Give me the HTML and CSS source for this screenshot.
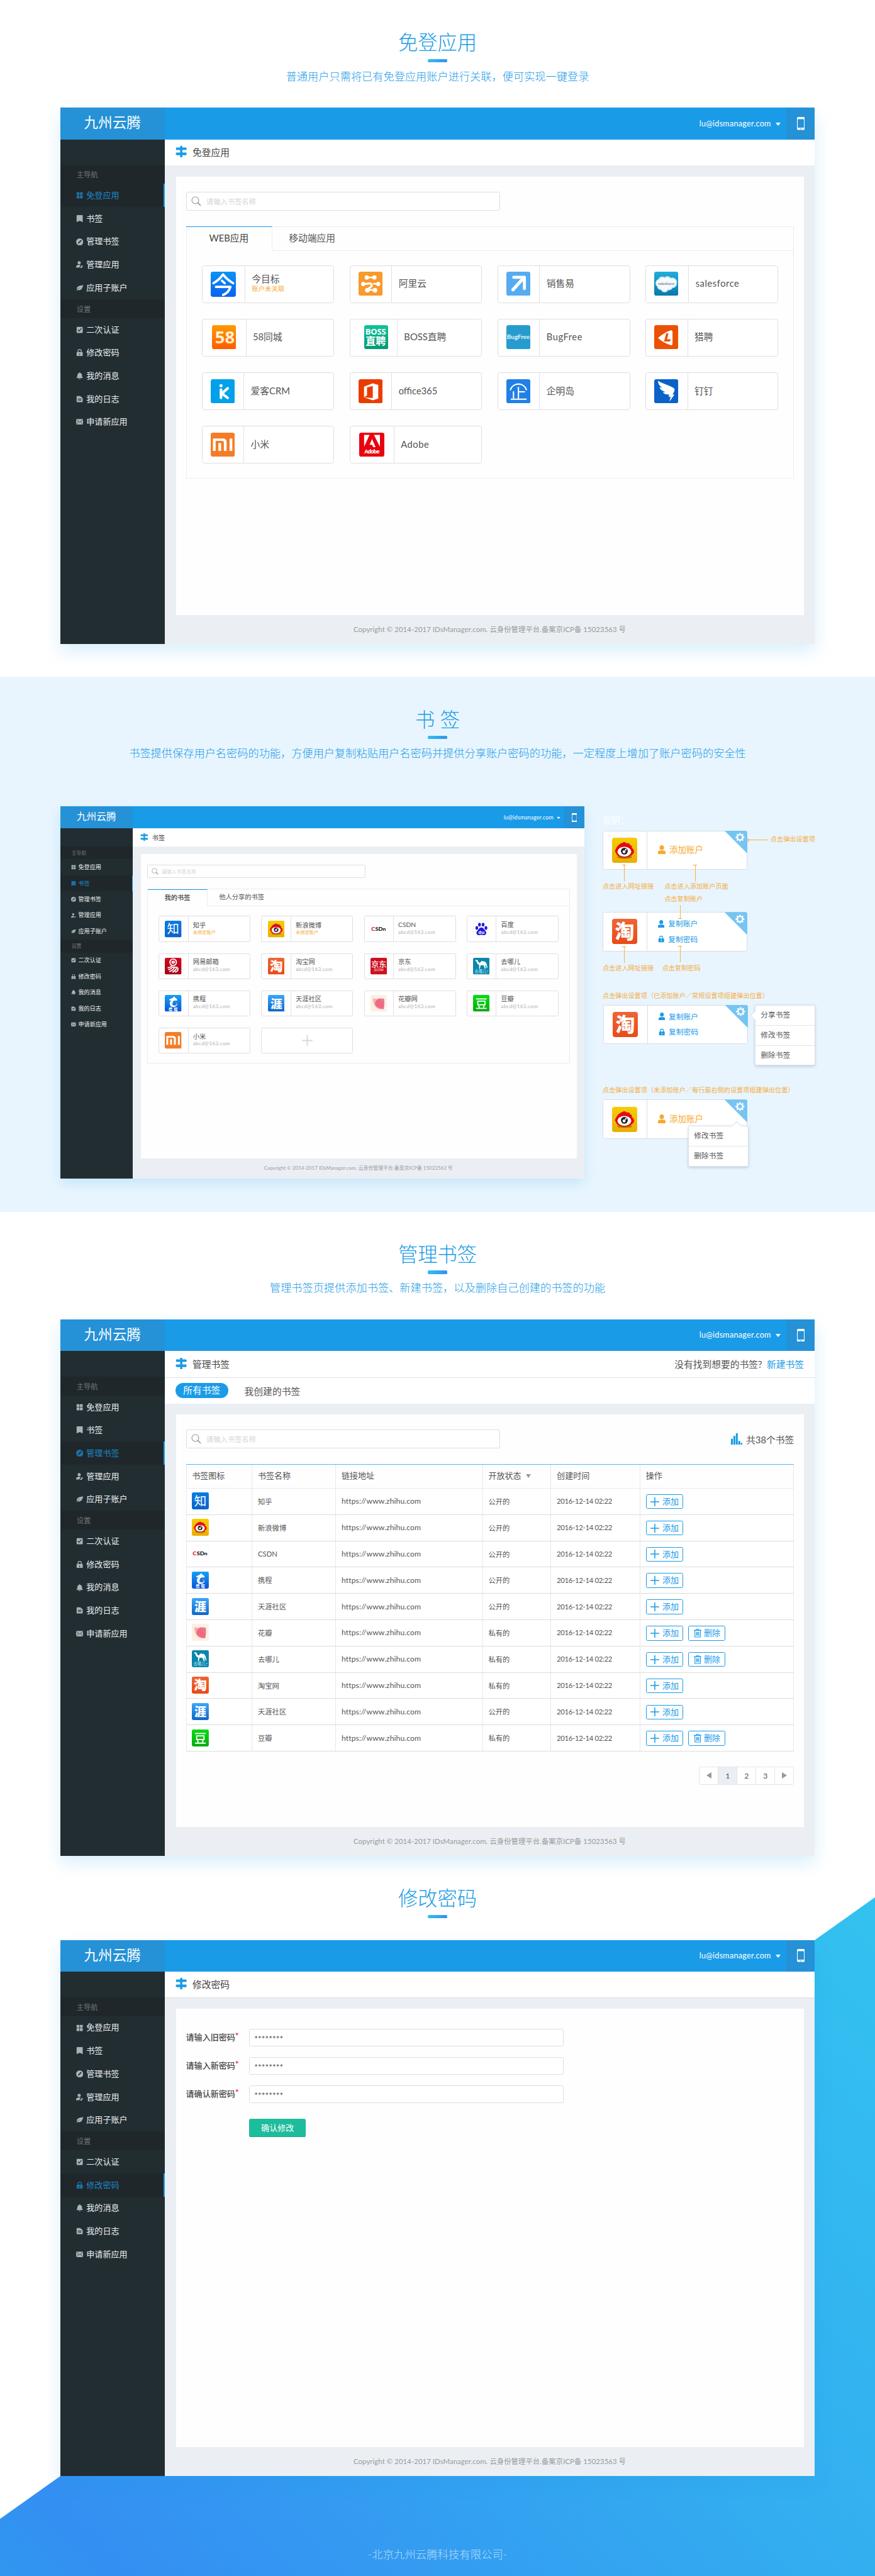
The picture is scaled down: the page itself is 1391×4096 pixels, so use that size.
FILE: index.html
```html
<!DOCTYPE html>
<html lang="zh-CN">
<head>
<meta charset="utf-8">
<title>九州云腾</title>
<link rel="stylesheet" href="styles.css">
</head>
<body>

<svg class="paints" width="0" height="0" aria-hidden="true">
  <defs>
    <linearGradient id="g-jin" x1="0" y1="0" x2="0" y2="1"><stop offset="0" stop-color="#0b93f6"/><stop offset="1" stop-color="#0a63f0"/></linearGradient>
    <linearGradient id="g-58" x1="0" y1="0" x2="0" y2="1"><stop offset="0" stop-color="#ff9c00"/><stop offset="1" stop-color="#ff5a00"/></linearGradient>
    <linearGradient id="g-58t" x1="0" y1="0" x2="0" y2="1"><stop offset="0" stop-color="#ffffff"/><stop offset="1" stop-color="#ffe2a8"/></linearGradient>
    <linearGradient id="g-boss" x1="0" y1="0" x2="0" y2="1"><stop offset="0" stop-color="#10c39c"/><stop offset="1" stop-color="#059a74"/></linearGradient>
    <linearGradient id="g-sf" x1="0" y1="0" x2="0" y2="1"><stop offset="0" stop-color="#22addb"/><stop offset="1" stop-color="#0a78a8"/></linearGradient>
    <linearGradient id="g-zhi" x1="0" y1="0" x2="0" y2="1"><stop offset="0" stop-color="#0b7ce2"/><stop offset="1" stop-color="#0a63cb"/></linearGradient>
    <linearGradient id="g-wb" x1="0" y1="0" x2="0" y2="1"><stop offset="0" stop-color="#f6cd05"/><stop offset="1" stop-color="#e9ae06"/></linearGradient>
    <linearGradient id="g-tao" x1="0" y1="0" x2="0" y2="1"><stop offset="0" stop-color="#ee6534"/><stop offset="1" stop-color="#ea4a18"/></linearGradient>
    <linearGradient id="g-dou" x1="0" y1="0" x2="0" y2="1"><stop offset="0" stop-color="#06dc12"/><stop offset="1" stop-color="#05ab0e"/></linearGradient>
    <linearGradient id="g-ya" x1="0" y1="0" x2="0" y2="1"><stop offset="0" stop-color="#3da6fa"/><stop offset="1" stop-color="#0d67c9"/></linearGradient>
    <linearGradient id="g-xie" x1="0" y1="0" x2="0" y2="1"><stop offset="0" stop-color="#14a0f8"/><stop offset="1" stop-color="#0a55d8"/></linearGradient>
    <linearGradient id="g-yi" x1="0" y1="0" x2="0" y2="1"><stop offset="0" stop-color="#d40a22"/><stop offset="1" stop-color="#a30014"/></linearGradient>
  </defs>
</svg>

<svg class="symbols" aria-hidden="true">
  <symbol id="app-jin" viewBox="0 0 46 46"><rect width="46" height="46" rx="4" fill="url(#g-jin)"/><g fill="none" stroke="#fff" stroke-width="4.2" stroke-linecap="round" stroke-linejoin="round"><path d="M5 21 C12 17 19 10 22.500 5 C27 11 34 17 41 21"/><path d="M20.500 16.500 L25.500 21"/><path d="M9.500 27.800 H36 C34 34 30 40 22.500 42.500"/></g></symbol>
  <symbol id="app-ali" viewBox="0 0 44 44"><rect width="44" height="44" rx="4" fill="#f89a2c"/><g fill="#fff"><circle cx="15" cy="10.500" r="3.900"/><circle cx="29" cy="10.500" r="3.900"/><path d="M15 7.500 Q22 11 29 7.500 V13.500 Q22 10 15 13.500Z"/><circle cx="8.500" cy="22.500" r="3.900"/><circle cx="36" cy="22.500" r="3.900"/><circle cx="16" cy="33.800" r="4.200"/><circle cx="30" cy="33.800" r="4.200"/></g><g fill="none" stroke="#fff" stroke-linecap="round" stroke-linejoin="round"><path d="M9 22.500 L16 22 Q21 20.500 24 23 Q25 27 20 29.500 L16 34" stroke-width="3.800"/><path d="M35 22.500 L28 22" stroke-width="3"/><path d="M17 34.500 Q23 32 30 34.500" stroke-width="3"/></g></symbol>
  <symbol id="app-xsy" viewBox="0 0 44 44"><rect width="44" height="44" rx="4" fill="#56abf1"/><path d="M13.500 10.300 H33 V31" fill="none" stroke="#fff" stroke-width="5.500" stroke-linecap="round" stroke-linejoin="round"/><path d="M31 12 L12 33" stroke="#fff" stroke-width="6" stroke-linecap="round"/></symbol>
  <symbol id="app-sf" viewBox="0 0 44 44"><rect width="44" height="44" rx="4" fill="url(#g-sf)"/><path d="M8 14 A7 7 0 0 1 19 11 A7 7 0 0 1 30 12 A8 8 0 0 1 41 21 A8 8 0 0 1 33 29.500 A6.500 6.500 0 0 1 25 33 A6.500 6.500 0 0 1 13 33 A6.500 6.500 0 0 1 6 27 A7.500 7.500 0 0 1 8 14Z" fill="#f4fbff" stroke="#a8dcf5" stroke-width="1.500"/><text x="22" y="24" font-size="8" textLength="30" text-anchor="middle" class="serif" fill="#555">salesforce</text></symbol>
  <symbol id="app-58" viewBox="0 0 44 44"><rect width="44" height="44" rx="4" fill="url(#g-58)"/><text x="23.500" y="33.500" font-size="31.500" font-weight="700" text-anchor="middle" class="sans" fill="url(#g-58t)">58</text></symbol>
  <symbol id="app-boss" viewBox="0 0 44 44"><rect width="44" height="44" rx="4" fill="url(#g-boss)"/><text x="21" y="17" font-size="15" font-weight="700" textLength="38" text-anchor="middle" class="sans" fill="#fff">BOSS</text><text x="21" y="36" font-size="18.500" font-weight="700" text-anchor="middle" fill="#fff">直聘</text></symbol>
  <symbol id="app-bug" viewBox="0 0 44 44"><rect width="44" height="44" rx="4" fill="#259ccd"/><text x="22" y="25" font-size="11.500" font-weight="700" textLength="42" text-anchor="middle" fill="#e9f6fb">BugFree</text></symbol>
  <symbol id="app-lie" viewBox="0 0 44 44"><rect width="44" height="44" rx="4" fill="#ec5103"/><path d="M8 22.500 C15 17 22 12 30 9.500 Q33.500 9 33.500 13 V33 Q33.500 37.500 30 36.500 C21 34 14 29.500 8 24.500 Q7 23.500 8 22.500Z" fill="#fff"/><path d="M22 15 H26 L23.500 26 H30 L29 30 H18Z" fill="#ec5103"/></symbol>
  <symbol id="app-ik" viewBox="0 0 44 44"><rect width="44" height="44" rx="4" fill="#00a0ea"/><circle cx="18.800" cy="11.800" r="2.900" fill="#fff"/><g fill="none" stroke="#fff" stroke-width="4.800" stroke-linecap="round"><path d="M18.800 19 V34"/><path d="M31 16.500 L20.500 26 L31 34"/></g></symbol>
  <symbol id="app-office" viewBox="0 0 44 44"><rect width="44" height="44" rx="4" fill="#eb3c00"/><path d="M10 13.500 L26 7.500 L36 10.300 V35.500 L26 38.500 L10 33 L26 34.500 V12.500 L15.500 15 V29.500 L10 33Z" fill="#fff"/></symbol>
  <symbol id="app-qi" viewBox="0 0 44 44"><rect width="44" height="44" rx="4" fill="#2180e6"/><g fill="none" stroke="#fff" stroke-width="2.400"><path d="M7 20 C12 5 32 5 37 20"/><path d="M22 14 V35 M22 23 H34 M13 22 V35 M8 36.500 H37"/></g></symbol>
  <symbol id="app-ding" viewBox="0 0 44 44"><rect width="44" height="44" rx="4" fill="#0a62c8"/><path d="M7 3 C14 8 28 11 36 16.500 C39 19 36 24 33.500 28 H37 L28 41 L30 32 H26 L27.500 28 C20 28 17 26 16 23.500 L21 23.500 C13 21 10.500 18 10 14.500 L15 15.500 C9 12 7 8 7 3Z" fill="#fff"/></symbol>
  <symbol id="app-mi" viewBox="0 0 44 44"><rect width="44" height="44" rx="4" fill="#f47c26"/><path d="M4 10.500 H22 Q29 10.500 29 17 V33.500 H24 V18 Q24 15 21 15 H9 V33.500 H4Z M14 19 H19 V33.500 H14Z M34.500 10.500 H39.500 V33.500 H34.500Z" fill="#fff"/></symbol>
  <symbol id="app-adobe" viewBox="0 0 46 44"><rect width="46" height="44" rx="4" fill="#e9020f"/><path d="M9 4 H19 L9 26Z M38 4 H27 L38 26Z M23.500 11.500 L30 26.500 H25.500 L23.800 22 H19Z" fill="#fff"/><text x="23.500" y="38.500" font-size="10.500" font-weight="700" textLength="28" text-anchor="middle" class="sans" fill="#fff">Adobe</text></symbol>

  <symbol id="app-zhihu" viewBox="0 0 44 44"><rect width="44" height="44" rx="4" fill="url(#g-zhi)"/><text x="22" y="33.500" font-size="32" font-weight="400" text-anchor="middle" fill="#fff">知</text></symbol>
  <symbol id="app-weibo" viewBox="0 0 44 44"><rect width="44" height="44" rx="4" fill="url(#g-wb)"/><ellipse cx="22" cy="34" rx="13" ry="3" fill="#b47a00"/><path d="M5 24 C7 16 13 10 18 9 C20 7 24 7 25 10 C29 9 32 10 31 13 C35 13 35 16 34.500 18 C39 21 40 26 36 29 C30 37 10 37 7 27Z" fill="#e40a12"/><ellipse cx="21.500" cy="24.500" rx="12" ry="8.500" fill="#fff"/><circle cx="21.500" cy="23.500" r="6" fill="#222"/><circle cx="21" cy="24.500" r="2.600" fill="#fff"/><circle cx="24" cy="21" r="1.500" fill="#fff"/></symbol>
  <symbol id="app-csdn" viewBox="0 0 44 44"><rect x=".5" y=".5" width="43" height="43" rx="5" fill="#fff" stroke="#f1f1f1"/><text x="2" y="26" font-size="13" font-weight="900" textLength="10" lengthAdjust="spacingAndGlyphs" class="lato" fill="#d60e18">C</text><text x="12.500" y="26" font-size="13" font-weight="900" textLength="28" lengthAdjust="spacingAndGlyphs" class="lato" fill="#151515">SDn</text></symbol>
  <symbol id="app-baidu" viewBox="0 0 44 44"><rect x=".5" y=".5" width="43" height="43" rx="5" fill="#fff" stroke="#ececec"/><g fill="#2319dc"><ellipse cx="10" cy="19" rx="3.600" ry="4.800"/><ellipse cx="17" cy="10.500" rx="3.600" ry="5"/><ellipse cx="26.500" cy="10.500" rx="3.600" ry="5"/><ellipse cx="34" cy="19" rx="3.600" ry="4.800"/><path d="M22 18 C27 18 29 23 33 27 C37 32 34 38.500 28 38 C24 37.300 20 37.300 16 38 C9 38.500 7 32 11 27 C15 23 17 18 22 18Z"/></g><text x="22" y="35" font-size="13" font-weight="700" text-anchor="middle" class="sans" fill="#fff">du</text></symbol>
  <symbol id="app-yi" viewBox="0 0 44 44"><rect width="44" height="44" rx="4" fill="url(#g-yi)"/><g fill="none" stroke="#fff" stroke-width="3" stroke-linecap="round"><circle cx="22" cy="11.800" r="8.600"/><path d="M18.500 12 H26 Q25.500 8.500 22 8.500 Q18.500 8.800 18.500 12 Q19 15.500 24.500 15" stroke-width="2.200"/><path d="M8.500 26 C13 26 16 24 18 21.500"/><path d="M10 31 C15 30 18 28 20.500 24.500 H30 C37 25 36 36 28 37.500"/><path d="M13 36 C19 34 23 31 25.500 26"/><path d="M21 37.500 C26 35 29 32 30.500 28"/></g></symbol>
  <symbol id="app-tao" viewBox="0 0 44 44"><rect width="44" height="44" rx="4" fill="url(#g-tao)"/><text x="22" y="34.500" font-size="34" font-weight="900" text-anchor="middle" fill="#fff">淘</text></symbol>
  <symbol id="app-jd" viewBox="0 0 44 44"><rect width="44" height="44" rx="4" fill="#cf1020"/><text x="22" y="24.500" font-size="20" font-weight="500" text-anchor="middle" fill="#fff">京东</text><text x="22" y="35.500" font-size="7.500" textLength="24" text-anchor="middle" class="sans" fill="#fff">JD.COM</text></symbol>
  <symbol id="app-qunar" viewBox="0 0 44 44"><rect width="44" height="44" rx="4" fill="#0b86ab"/><path d="M5 7 C8 4 12 5 13 8 C14 12 16 14 19 13 C21 8 25 7 27 10 C29 9 32 9 34 13 C37 17 37 22 38 27 L36 27 C35 23 34 20 32 18 C33 22 33 26 33 29 H31 C30 25 29 22 27 19 C24 20 22 20 20 19 L18 29 H16 L16 18 C12 18 10 14 9 9Z" fill="#fff"/><text x="22" y="39" font-size="10.500" text-anchor="middle" fill="#bfe6f2">去哪儿?</text></symbol>
  <symbol id="app-ctrip" viewBox="0 0 44 44"><rect width="44" height="44" rx="4" fill="url(#g-xie)"/><path d="M11 12.500 C14 10.500 17 9 20 8.500 C22 5.500 24 4.500 26.500 4.500 C26 6 26 7 26.500 7.500 C30 8.500 32.500 11 33.500 14.500 C31 14.800 28 15 26 15 C21 16 19.500 21 21 25 C17 24 15 20 17 15.500 C14 15 11.500 14 11 12.500Z" fill="#fff"/><path d="M14.500 17 C11 23 14 31 21 32 C28 33 33.500 28 33.500 22 C31 27 27 29 23 27.500 C18.500 26 16 22 17 17Z" fill="#fff"/><path d="M28 18 Q31 22 28.500 26 Q32 24 31.500 19.500Z" fill="#f8961c"/><text x="22" y="41.500" font-size="9.500" font-weight="900" textLength="23" text-anchor="middle" fill="#fff">携程</text></symbol>
  <symbol id="app-tianya" viewBox="0 0 44 44"><rect width="44" height="44" rx="4" fill="url(#g-ya)"/><text x="22" y="34" font-size="31" font-weight="900" text-anchor="middle" fill="#fff">涯</text></symbol>
  <symbol id="app-huaban" viewBox="0 0 44 44"><rect width="44" height="44" rx="4" fill="#fcf0e2"/><path d="M6 9 L22 11 C28 14 35 24 35 34 L26 38 C14 36 7 26 6 9Z" fill="#f7aeb0"/><path d="M22 9 L36 10 C37 22 37 30 34 38 C28 36 14 34 12 24 C12 16 17 12 22 9Z" fill="#ec5f7c" opacity=".85"/></symbol>
  <symbol id="app-douban" viewBox="0 0 44 44"><rect width="44" height="44" rx="4" fill="url(#g-dou)"/><g fill="none" stroke="#fff" stroke-width="3"><path d="M8 10.500 H36 M8 35.500 H36"/><rect x="12.500" y="16.500" width="19" height="9.500"/><path d="M14.500 28 L17 34 M29.500 28 L27 34"/></g></symbol>

  <symbol id="i-grid" viewBox="0 0 14 14"><path d="M1 1h5.500v5.500H1zM7.500 1H13v5.500H7.500zM1 7.500h5.500V13H1zM7.500 7.500H13V13H7.500z" fill="currentColor"/></symbol>
  <symbol id="i-mark" viewBox="0 0 14 14"><path d="M2 0h10q1 0 1 1v13l-6-3-6 3V1q0-1 1-1z" fill="currentColor"/></symbol>
  <symbol id="i-pen" viewBox="0 0 14 14"><path fill-rule="evenodd" d="M7 0a7 7 0 1 0 0 14A7 7 0 0 0 7 0zM9.300 3l1.700 1.700-5 5L3.500 10.500 4.300 8z" fill="currentColor"/></symbol>
  <symbol id="i-useredit" viewBox="0 0 14 14"><circle cx="6" cy="3.300" r="3.100" fill="currentColor"/><path d="M0 13V10.500Q1 8 6 7.500Q8 7.600 9 8.300L6 13z" fill="currentColor"/><path d="M7 13.500L12 8.500a1.500 1.500 0 0 1 1 2L11 13.500z" fill="currentColor"/></symbol>
  <symbol id="i-leaf" viewBox="0 0 14 14"><path d="M14 1.500C8 3 3 3 1.500 7.500Q1 9.500 1.500 10.500Q4 7.500 8.500 6Q4 8.500 .5 12.500L1.500 13 3 11.300Q8 13 11 9Q13 6 14 1.500z" fill="currentColor"/></symbol>
  <symbol id="i-check" viewBox="0 0 14 14"><path fill-rule="evenodd" d="M2.500 1h9Q13 1 13 2.500v9q0 1.500-1.500 1.500h-9Q1 13 1 11.500v-9Q1 1 2.500 1zM3 7l3 3.500L11 4 10 3 6 8 4 6z" fill="currentColor"/></symbol>
  <symbol id="i-lock" viewBox="0 0 14 14"><path fill-rule="evenodd" d="M3 6V4a4 4 0 0 1 8 0v2h1q1 0 1 1v6q0 1-1 1H2q-1 0-1-1V7q0-1 1-1zM4.500 6h5V4a2.500 2.500 0 0 0-5 0zM6.300 9v3h1.400V9z" fill="currentColor"/></symbol>
  <symbol id="i-bell" viewBox="0 0 14 14"><path d="M7 0Q8 0 8 1.200Q11.500 2 11.500 6Q11.500 9 13 10.500V11.500H1V10.500Q2.500 9 2.500 6Q2.500 2 6 1.200Q6 0 7 0zM5.500 12.300h3Q8.500 14 7 14T5.500 12.300z" fill="currentColor"/></symbol>
  <symbol id="i-file" viewBox="0 0 14 14"><path fill-rule="evenodd" d="M2 1h6l5 4v7q0 1-1 1H2q-1 0-1-1V2q0-1 1-1zM3.500 6v1h7V6zM3.500 8.500v1h7v-1z" fill="currentColor"/></symbol>
  <symbol id="i-mail" viewBox="0 0 14 14"><path d="M0 1.500h14v11H0z" fill="currentColor"/><path d="M.5 2.500L7 8l6.500-5.500M.5 12L5 7M13.500 12L9 7" stroke="#222d32" fill="none"/></symbol>
  <symbol id="i-sign" viewBox="0 0 21 21"><path d="M8.500 0h4v3h6.500l2 2-2 2.500H12.500V12H20v5h-7.500v4h-4v-4H2L0 14.500 2 12h6.500V7.500H1V3h7.500z" fill="#1a9be7"/></symbol>
  <symbol id="i-search" viewBox="0 0 18 18"><circle cx="7.500" cy="7.500" r="6.300" fill="none" stroke="#999" stroke-width="1.300"/><path d="M12 12l5 5" stroke="#999" stroke-width="1.900" stroke-linecap="round"/></symbol>
  <symbol id="i-phone" viewBox="0 0 14 24"><path fill-rule="evenodd" d="M2 0h10q2 0 2 2v20q0 2-2 2H2q-2 0-2-2V2q0-2 2-2zM1.300 4v15.500h11.400V4zM6 21v1.500h2V21z" fill="#fff"/></symbol>
  <symbol id="i-user" viewBox="0 0 14 16"><ellipse cx="7" cy="4.300" rx="4" ry="4.300" fill="currentColor"/><path d="M0 16v-2.500Q0 9.800 4 9.600H10Q14 9.800 14 13.500V16z" fill="currentColor"/></symbol>
  <symbol id="i-gear" viewBox="0 0 18 18"><circle cx="9" cy="9" r="5" fill="none" stroke="#fff" stroke-width="2.600"/><g stroke="#fff" stroke-width="3.200"><path d="M9 .5v3M9 14.500v3M.5 9h3M14.500 9h3M3 3l2 2M13 13l2 2M15 3l-2 2M5 13l-2 2"/></g></symbol>
  <symbol id="i-plus" viewBox="0 0 16 16"><path d="M8 0v16M0 8h16" stroke="currentColor" stroke-width="1.800"/></symbol>
  <symbol id="i-trash" viewBox="0 0 14 16"><path d="M0 2.800h14M4.500 2.500V.8h5v1.700M2 3v12h10V3M5 5.500v7M7 5.500v7M9 5.500v7" fill="none" stroke="currentColor" stroke-width="1.300"/></symbol>
  <symbol id="i-chart" viewBox="0 0 21 21"><path d="M0 10h3.500v11H0zM4.500 5H8v16H4.500zM9 0h3.500v21H9zM13.500 14H17v7h-3.500zM18 17.500h3V21h-3z" fill="#1a9be7"/></symbol>
</svg>

<main class="page">

  <section class="block block-apps">
    <h2 class="title">免登应用</h2>
    <div class="bar"></div>
    <p class="lead">普通用户只需将已有免登应用账户进行关联，便可实现一键登录</p>
    <div class="win">
      <header class="top"><div class="logo">九州云腾</div><div class="user">lu@idsmanager.com<i class="caret"></i></div><div class="phone"><svg><use href="#i-phone"/></svg></div></header>
      <nav class="side">
        <h4>主导航</h4>
        <a class="on"><svg><use href="#i-grid"/></svg>免登应用</a>
        <a><svg><use href="#i-mark"/></svg>书签</a>
        <a><svg><use href="#i-pen"/></svg>管理书签</a>
        <a><svg><use href="#i-useredit"/></svg>管理应用</a>
        <a><svg><use href="#i-leaf"/></svg>应用子账户</a>
        <h4>设置</h4>
        <a><svg><use href="#i-check"/></svg>二次认证</a>
        <a><svg><use href="#i-lock"/></svg>修改密码</a>
        <a><svg><use href="#i-bell"/></svg>我的消息</a>
        <a><svg><use href="#i-file"/></svg>我的日志</a>
        <a><svg><use href="#i-mail"/></svg>申请新应用</a>
      </nav>
      <div class="body">
        <div class="crumb"><svg><use href="#i-sign"/></svg>免登应用</div>
        <div class="panel">
          <div class="search"><svg><use href="#i-search"/></svg>请输入书签名称</div>
          <div class="tabs">
            <div class="tabhead"><span class="tab on">WEB应用</span><span class="tab">移动端应用</span></div>
            <div class="cards">
              <div class="card"><div class="ico big"><svg><use href="#app-jin"/></svg></div><div class="txt"><b>今目标</b><em>账户未关联</em></div></div>
              <div class="card"><div class="ico"><svg><use href="#app-ali"/></svg></div><div class="txt"><b>阿里云</b></div></div>
              <div class="card"><div class="ico"><svg><use href="#app-xsy"/></svg></div><div class="txt"><b>销售易</b></div></div>
              <div class="card"><div class="ico wide"><svg><use href="#app-sf"/></svg></div><div class="txt"><b class="latin">salesforce</b></div></div>
              <div class="card"><div class="ico wider"><svg><use href="#app-58"/></svg></div><div class="txt"><b>58同城</b></div></div>
              <div class="card"><div class="ico inset"><svg><use href="#app-boss"/></svg></div><div class="txt"><b>BOSS直聘</b></div></div>
              <div class="card"><div class="ico"><svg><use href="#app-bug"/></svg></div><div class="txt"><b class="latin">BugFree</b></div></div>
              <div class="card"><div class="ico"><svg><use href="#app-lie"/></svg></div><div class="txt"><b>猎聘</b></div></div>
              <div class="card"><div class="ico"><svg><use href="#app-ik"/></svg></div><div class="txt"><b>爱客CRM</b></div></div>
              <div class="card"><div class="ico"><svg><use href="#app-office"/></svg></div><div class="txt"><b>office365</b></div></div>
              <div class="card"><div class="ico"><svg><use href="#app-qi"/></svg></div><div class="txt"><b>企明岛</b></div></div>
              <div class="card"><div class="ico"><svg><use href="#app-ding"/></svg></div><div class="txt"><b>钉钉</b></div></div>
              <div class="card"><div class="ico"><svg><use href="#app-mi"/></svg></div><div class="txt"><b>小米</b></div></div>
              <div class="card"><div class="ico adobe"><svg><use href="#app-adobe"/></svg></div><div class="txt"><b class="latin">Adobe</b></div></div>
            </div>
          </div>
        </div>
        <footer class="copy">Copyright © 2014-2017 IDsManager.com. 云身份管理平台.备案京ICP备 15023563 号</footer>
      </div>
    </div>
  </section>

  <section class="block block-marks">
    <h2 class="title">书 签</h2>
    <div class="bar"></div>
    <p class="lead">书签提供保存用户名密码的功能，方便用户复制粘贴用户名密码并提供分享账户密码的功能，一定程度上增加了账户密码的安全性</p>
    <div class="split">
      <div class="win small">
        <header class="top"><div class="logo">九州云腾</div><div class="user">lu@idsmanager.com<i class="caret"></i></div><div class="phone"><svg><use href="#i-phone"/></svg></div></header>
        <nav class="side">
          <h4>主导航</h4>
          <a><svg><use href="#i-grid"/></svg>免登应用</a>
          <a class="on"><svg><use href="#i-mark"/></svg>书签</a>
          <a><svg><use href="#i-pen"/></svg>管理书签</a>
          <a><svg><use href="#i-useredit"/></svg>管理应用</a>
          <a><svg><use href="#i-leaf"/></svg>应用子账户</a>
          <h4>设置</h4>
          <a><svg><use href="#i-check"/></svg>二次认证</a>
          <a><svg><use href="#i-lock"/></svg>修改密码</a>
          <a><svg><use href="#i-bell"/></svg>我的消息</a>
          <a><svg><use href="#i-file"/></svg>我的日志</a>
          <a><svg><use href="#i-mail"/></svg>申请新应用</a>
        </nav>
        <div class="body">
          <div class="crumb"><svg><use href="#i-sign"/></svg>书签</div>
          <div class="panel">
            <div class="search"><svg><use href="#i-search"/></svg>请输入书签名称</div>
            <div class="tabs">
              <div class="tabhead"><span class="tab on strong">我的书签</span><span class="tab">他人分享的书签</span></div>
              <div class="cards">
                <div class="card"><div class="ico"><svg><use href="#app-zhihu"/></svg></div><div class="txt"><b>知乎</b><em>未绑定账户</em></div></div>
                <div class="card"><div class="ico"><svg><use href="#app-weibo"/></svg></div><div class="txt"><b>新浪微博</b><em>未绑定账户</em></div></div>
                <div class="card"><div class="ico"><svg><use href="#app-csdn"/></svg></div><div class="txt"><b>CSDN</b><small>abcd@163.com</small></div></div>
                <div class="card"><div class="ico"><svg><use href="#app-baidu"/></svg></div><div class="txt"><b>百度</b><small>abcd@163.com</small></div></div>
                <div class="card"><div class="ico"><svg><use href="#app-yi"/></svg></div><div class="txt"><b>网易邮箱</b><small>abcd@163.com</small></div></div>
                <div class="card"><div class="ico"><svg><use href="#app-tao"/></svg></div><div class="txt"><b>淘宝网</b><small>abcd@163.com</small></div></div>
                <div class="card"><div class="ico"><svg><use href="#app-jd"/></svg></div><div class="txt"><b>京东</b><small>abcd@163.com</small></div></div>
                <div class="card"><div class="ico"><svg><use href="#app-qunar"/></svg></div><div class="txt"><b>去哪儿</b><small>abcd@163.com</small></div></div>
                <div class="card"><div class="ico"><svg><use href="#app-ctrip"/></svg></div><div class="txt"><b>携程</b><small>abcd@163.com</small></div></div>
                <div class="card"><div class="ico"><svg><use href="#app-tianya"/></svg></div><div class="txt"><b>天涯社区</b><small>abcd@163.com</small></div></div>
                <div class="card"><div class="ico"><svg><use href="#app-huaban"/></svg></div><div class="txt"><b>花瓣网</b><small>abcd@163.com</small></div></div>
                <div class="card"><div class="ico"><svg><use href="#app-douban"/></svg></div><div class="txt"><b>豆瓣</b><small>abcd@163.com</small></div></div>
                <div class="card"><div class="ico"><svg><use href="#app-mi"/></svg></div><div class="txt"><b>小米</b><small>abcd@163.com</small></div></div>
                <div class="card add"><svg><use href="#i-plus"/></svg></div>
              </div>
            </div>
          </div>
          <footer class="copy">Copyright © 2014-2017 IDsManager.com. 云身份管理平台.备案京ICP备 15023563 号</footer>
        </div>
      </div>

      <aside class="notes">
        <h3>说明：</h3>
        <div class="demo">
          <div class="demo-ico"><svg><use href="#app-weibo"/></svg></div>
          <div class="demo-txt"><p class="orange"><svg><use href="#i-user"/></svg>添加账户</p></div>
          <div class="corner"><svg><use href="#i-gear"/></svg></div>
          <i class="pin across"></i><span class="tip t-set">点击弹出设置项</span>
          <i class="pin p-left"></i><span class="tip t-left">点击进入网址链接</span>
          <i class="pin p-mid"></i><span class="tip t-mid">点击进入添加账户页面</span>
        </div>
        <div class="demo second">
          <div class="demo-ico"><svg><use href="#app-tao"/></svg></div>
          <div class="demo-txt"><p><svg><use href="#i-user"/></svg>复制账户</p><p><svg><use href="#i-lock"/></svg>复制密码</p></div>
          <div class="corner"><svg><use href="#i-gear"/></svg></div>
          <span class="tip t-above">点击复制账户</span><i class="pin down p-above"></i>
          <i class="pin p-left"></i><span class="tip t-left">点击进入网址链接</span>
          <i class="pin p-pass"></i><span class="tip t-pass">点击复制密码</span>
        </div>
        <p class="cap">点击弹出设置项（已添加账户／常规设置项组建弹出位置）</p>
        <div class="demo third">
          <div class="demo-ico"><svg><use href="#app-tao"/></svg></div>
          <div class="demo-txt"><p><svg><use href="#i-user"/></svg>复制账户</p><p><svg><use href="#i-lock"/></svg>复制密码</p></div>
          <div class="corner"><svg><use href="#i-gear"/></svg></div>
          <ul class="menu beside"><li>分享书签</li><li>修改书签</li><li>删除书签</li></ul>
        </div>
        <p class="cap last">点击弹出设置项（未添加账户／每行最右侧的设置项组建弹出位置）</p>
        <div class="demo fourth">
          <div class="demo-ico"><svg><use href="#app-weibo"/></svg></div>
          <div class="demo-txt"><p class="orange"><svg><use href="#i-user"/></svg>添加账户</p></div>
          <div class="corner"><svg><use href="#i-gear"/></svg></div>
          <ul class="menu below"><li>修改书签</li><li>删除书签</li></ul>
        </div>
      </aside>
    </div>
  </section>

  <section class="block block-manage">
    <h2 class="title">管理书签</h2>
    <div class="bar"></div>
    <p class="lead">管理书签页提供添加书签、新建书签，以及删除自己创建的书签的功能</p>
    <div class="win">
      <header class="top"><div class="logo">九州云腾</div><div class="user">lu@idsmanager.com<i class="caret"></i></div><div class="phone"><svg><use href="#i-phone"/></svg></div></header>
      <nav class="side">
        <h4>主导航</h4>
        <a><svg><use href="#i-grid"/></svg>免登应用</a>
        <a><svg><use href="#i-mark"/></svg>书签</a>
        <a class="on"><svg><use href="#i-pen"/></svg>管理书签</a>
        <a><svg><use href="#i-useredit"/></svg>管理应用</a>
        <a><svg><use href="#i-leaf"/></svg>应用子账户</a>
        <h4>设置</h4>
        <a><svg><use href="#i-check"/></svg>二次认证</a>
        <a><svg><use href="#i-lock"/></svg>修改密码</a>
        <a><svg><use href="#i-bell"/></svg>我的消息</a>
        <a><svg><use href="#i-file"/></svg>我的日志</a>
        <a><svg><use href="#i-mail"/></svg>申请新应用</a>
      </nav>
      <div class="body">
        <div class="crumb"><svg><use href="#i-sign"/></svg>管理书签<span class="ask">没有找到想要的书签? <a>新建书签</a></span></div>
        <div class="filter"><span class="pill">所有书签</span><span>我创建的书签</span></div>
        <div class="panel">
          <div class="tools">
            <div class="search"><svg><use href="#i-search"/></svg>请输入书签名称</div>
            <div class="count"><svg><use href="#i-chart"/></svg>共38个书签</div>
          </div>
          <div class="table">
            <div class="tr th"><span>书签图标</span><span>书签名称</span><span>链接地址</span><span>开放状态<i class="caret"></i></span><span>创建时间</span><span>操作</span></div>
            <div class="tr"><span><svg><use href="#app-zhihu"/></svg></span><span>知乎</span><span class="url">https://www.zhihu.com</span><span>公开的</span><span class="time">2016-12-14 02:22</span><span><a class="btn"><svg><use href="#i-plus"/></svg>添加</a></span></div>
            <div class="tr"><span><svg><use href="#app-weibo"/></svg></span><span>新浪微博</span><span class="url">https://www.zhihu.com</span><span>公开的</span><span class="time">2016-12-14 02:22</span><span><a class="btn"><svg><use href="#i-plus"/></svg>添加</a></span></div>
            <div class="tr"><span><svg><use href="#app-csdn"/></svg></span><span>CSDN</span><span class="url">https://www.zhihu.com</span><span>公开的</span><span class="time">2016-12-14 02:22</span><span><a class="btn"><svg><use href="#i-plus"/></svg>添加</a></span></div>
            <div class="tr"><span><svg><use href="#app-ctrip"/></svg></span><span>携程</span><span class="url">https://www.zhihu.com</span><span>公开的</span><span class="time">2016-12-14 02:22</span><span><a class="btn"><svg><use href="#i-plus"/></svg>添加</a></span></div>
            <div class="tr"><span><svg><use href="#app-tianya"/></svg></span><span>天涯社区</span><span class="url">https://www.zhihu.com</span><span>公开的</span><span class="time">2016-12-14 02:22</span><span><a class="btn"><svg><use href="#i-plus"/></svg>添加</a></span></div>
            <div class="tr"><span><svg><use href="#app-huaban"/></svg></span><span>花瓣</span><span class="url">https://www.zhihu.com</span><span>私有的</span><span class="time">2016-12-14 02:22</span><span><a class="btn"><svg><use href="#i-plus"/></svg>添加</a><a class="btn del"><svg><use href="#i-trash"/></svg>删除</a></span></div>
            <div class="tr"><span><svg><use href="#app-qunar"/></svg></span><span>去哪儿</span><span class="url">https://www.zhihu.com</span><span>私有的</span><span class="time">2016-12-14 02:22</span><span><a class="btn"><svg><use href="#i-plus"/></svg>添加</a><a class="btn del"><svg><use href="#i-trash"/></svg>删除</a></span></div>
            <div class="tr"><span><svg><use href="#app-tao"/></svg></span><span>淘宝网</span><span class="url">https://www.zhihu.com</span><span>私有的</span><span class="time">2016-12-14 02:22</span><span><a class="btn"><svg><use href="#i-plus"/></svg>添加</a></span></div>
            <div class="tr"><span><svg><use href="#app-tianya"/></svg></span><span>天涯社区</span><span class="url">https://www.zhihu.com</span><span>公开的</span><span class="time">2016-12-14 02:22</span><span><a class="btn"><svg><use href="#i-plus"/></svg>添加</a></span></div>
            <div class="tr"><span><svg><use href="#app-douban"/></svg></span><span>豆瓣</span><span class="url">https://www.zhihu.com</span><span>私有的</span><span class="time">2016-12-14 02:22</span><span><a class="btn"><svg><use href="#i-plus"/></svg>添加</a><a class="btn del"><svg><use href="#i-trash"/></svg>删除</a></span></div>
          </div>
          <div class="pager"><span><i class="prev"></i></span><span class="on">1</span><span>2</span><span>3</span><span><i class="next"></i></span></div>
        </div>
        <footer class="copy">Copyright © 2014-2017 IDsManager.com. 云身份管理平台.备案京ICP备 15023563 号</footer>
      </div>
    </div>
  </section>

  <section class="block block-pass">
    <h2 class="title">修改密码</h2>
    <div class="bar"></div>
    <div class="win">
      <header class="top"><div class="logo">九州云腾</div><div class="user">lu@idsmanager.com<i class="caret"></i></div><div class="phone"><svg><use href="#i-phone"/></svg></div></header>
      <nav class="side">
        <h4>主导航</h4>
        <a><svg><use href="#i-grid"/></svg>免登应用</a>
        <a><svg><use href="#i-mark"/></svg>书签</a>
        <a><svg><use href="#i-pen"/></svg>管理书签</a>
        <a><svg><use href="#i-useredit"/></svg>管理应用</a>
        <a><svg><use href="#i-leaf"/></svg>应用子账户</a>
        <h4>设置</h4>
        <a><svg><use href="#i-check"/></svg>二次认证</a>
        <a class="on"><svg><use href="#i-lock"/></svg>修改密码</a>
        <a><svg><use href="#i-bell"/></svg>我的消息</a>
        <a><svg><use href="#i-file"/></svg>我的日志</a>
        <a><svg><use href="#i-mail"/></svg>申请新应用</a>
      </nav>
      <div class="body">
        <div class="crumb lined"><svg><use href="#i-sign"/></svg>修改密码</div>
        <div class="panel form">
          <div class="field"><label>请输入旧密码<sup>*</sup></label><div class="input">********</div></div>
          <div class="field"><label>请输入新密码<sup>*</sup></label><div class="input">********</div></div>
          <div class="field"><label>请确认新密码<sup>*</sup></label><div class="input">********</div></div>
          <div class="submit">确认修改</div>
        </div>
        <footer class="copy">Copyright © 2014-2017 IDsManager.com. 云身份管理平台.备案京ICP备 15023563 号</footer>
      </div>
    </div>
    <p class="company">-北京九州云腾科技有限公司-</p>
  </section>

</main>
</body>
</html>
```

FILE: styles.css
```css
* { box-sizing: border-box; margin: 0; padding: 0; }

html { overflow: hidden; }

body {
  background: #fff;
  font-family: Lato, "Noto Sans CJK SC", sans-serif;
  font-size: 15px;
  color: #555;
  white-space: nowrap;
}

svg { display: block; flex: none; }
.paints { position: absolute; }
.symbols { display: none; }
.serif { font-family: "Liberation Serif", serif; }
.sans { font-family: "Open Sans", sans-serif; }
.lato { font-family: Lato, sans-serif; }

.page { width: 1600px; height: 4711px; zoom: 0.8694; overflow: hidden; }

/* ---------- section headings ---------- */
.block { padding: 52px 110px 0; }
.block-apps { height: 1238px; }
.block-marks { height: 979px; background: #e8f5fe; }
.block-manage { height: 1178px; padding-top: 51px; }
.block-pass { height: 1317px; padding-top: 51px; position: relative; isolation: isolate; }
.block-pass::before {
  content: "";
  position: absolute;
  inset: 75px 0 0;
  z-index: -1;
  background: linear-gradient(225deg, #33c2f0 0%, #33aef0 45%, #348ff2 92%, #2f97f0 100%);
  clip-path: polygon(100% 0, 100% 100%, 0 100%, 0 1137px);
}

.title { height: 52px; line-height: 52px; text-align: center; font-size: 36px; font-weight: 300; color: #1a9be7; }
.bar { width: 35px; height: 6px; margin: 4px auto 0; border-radius: 2px; background: linear-gradient(135deg, #33c2f0, #348ff2); }
.lead { height: 28px; line-height: 28px; margin: 12px 0 43px; text-align: center; font-size: 19.8px; font-weight: 300; color: #1a9be7; }
.block-marks .lead { margin-bottom: 83px; }
.block-pass .bar { margin-bottom: 40px; }
.company { margin-top: 130px; height: 28px; line-height: 28px; text-align: center; font-size: 20px; font-weight: 300; color: rgba(255, 255, 255, .65); }

/* ---------- application window ---------- */
.win {
  width: 1380px;
  height: 981px;
  display: grid;
  grid-template: 58px 1fr / 191px 1fr;
  box-shadow: 0 14px 30px rgba(26, 155, 231, .17);
}
.win.small { zoom: .694; flex: none; }

.top { grid-column: 1 / 3; display: flex; background: #1a9be7; color: #fff; }
.logo { width: 191px; line-height: 56px; text-align: center; font-size: 26px; background: #2591d6; }
.user { margin-left: auto; display: flex; align-items: center; font-size: 14.500px; letter-spacing: .3px; }
.user .caret { margin: 2px 11px 0 8px; }
.caret { border: 5px solid transparent; border-top: 6px solid #fff; border-bottom: 0; }
.phone { width: 52px; display: flex; align-items: center; justify-content: center; background: #2591d6; }
.phone svg { width: 14px; height: 24px; }

.side { background: #222d32; padding-top: 47px; }
.side h4 { height: 34.500px; line-height: 36px; padding-left: 30px; font-size: 13px; font-weight: 400; color: #6d7578; background: #1f272a; }
.side a { height: 42.200px; display: flex; align-items: center; padding-left: 29px; font-size: 15px; line-height: 20px; color: #ecefef; border-right: 3px solid transparent; }
.side a svg { width: 13px; height: 13px; margin-right: 6px; color: #acb1b3; }
.side a.on { background: #1f272a; color: #1d86c6; border-color: #1a9be7; }
.side a.on svg { color: #1c72a6; }

.body { display: flex; flex-direction: column; background: #ebeff4; }
.crumb { height: 48px; display: flex; align-items: center; padding: 0 20px 2px; background: #fff; font-size: 17px; color: #444; }
.crumb > svg { width: 21px; height: 21px; margin-right: 10px; }
.crumb.lined { border-bottom: 1px solid #dcdfe3; }
.ask { margin-left: auto; color: #555; }
.ask a { color: #1a9be7; margin-left: 4px; }
.filter { height: 48px; display: flex; align-items: center; padding-left: 20px; background: #fff; border-top: 1px solid #dfe2e6; font-size: 17px; }
.pill { width: 96px; height: 28px; line-height: 26px; margin-right: 30px; border-radius: 14px; text-align: center; color: #fff; background: #1a9be7; }
.panel { flex: 1; margin: 20px 20px 0 21px; padding: 28px 18px 0; background: #fefefe; }
.copy { height: 53px; line-height: 53px; text-align: center; font-size: 13px; letter-spacing: .12px; color: #999; }

.search { width: 574px; height: 34px; display: flex; align-items: center; padding-left: 9px; border: 1px solid #dedede; border-radius: 3px; background: #fff; font-size: 13px; color: #d3d5d8; }
.search svg { width: 18px; height: 18px; margin-right: 9px; }

/* ---------- tabs and cards ---------- */
.tabs { height: 461px; margin-top: 29px; border: 1px solid #ececee; }
.tabhead { display: flex; height: 44px; }
.tab { flex: 1; padding: 0 0 0 30px; line-height: 40px; font-size: 17px; border-bottom: 1px solid #ececee; }
.tab.on { flex: none; width: 158px; margin: -1px 0 0 -1px; padding: 0; text-align: center; color: #444; border-top: 2px solid #1a9be7; border-right: 1px solid #ececee; border-bottom: 0; }
.tab.strong { font-weight: 500; }
.cards { display: grid; grid-template-columns: repeat(4, 242px); column-gap: 28.500px; row-gap: 29px; padding: 26px 28px 0; }
.card { height: 69px; display: flex; background: #fff; border: 1px solid #dfdfe1; border-bottom-width: 2px; border-radius: 4px; }
.ico { padding: 11px 16px 0 15px; border-right: 1px solid #e2e2e4; }
.ico svg { width: 44px; height: 44px; }
.ico.big svg { width: 46px; height: 46px; }
.ico.wide { padding-right: 18px; }
.ico.wider { padding: 11px 18px 0 17px; }
.ico.inset { padding-left: 25px; }
.ico.adobe { padding: 11px 17px 0 16px; }
.ico.adobe svg { width: 46px; }
.txt { display: flex; flex-direction: column; justify-content: center; padding: 0 0 3px 12px; }
.txt b { font-size: 17px; font-weight: 400; line-height: 21px; }
.txt b.latin { letter-spacing: .6px; }
.txt em { font-size: 12px; font-style: normal; line-height: 17px; color: #f5ad42; }
.txt small { font-size: 13.500px; line-height: 19px; letter-spacing: .55px; color: #b0b0b0; }
.card.add { align-items: center; justify-content: center; color: #d8d8d8; }
.card.add svg { width: 28px; height: 28px; }

/* ---------- bookmark notes ---------- */
.split { display: flex; }
.notes { width: 388px; margin-left: 34px; padding-top: 12px; }
.notes h3 { height: 25px; line-height: 25px; margin-bottom: 7px; font-size: 16px; font-weight: 400; color: #fff; letter-spacing: .3px; }
.demo { position: relative; width: 265px; height: 72px; display: flex; border: 1px solid #d9dde2; border-bottom-width: 2px; border-radius: 4px; background: #fff; }
.demo.second { margin-top: 77px; }
.demo.third { margin: 7px 0 0 1px; }
.demo.fourth { margin-top: 8px; }
.demo-ico { width: 81px; padding: 12px 0 0 16px; border-right: 1px solid #d9dde2; }
.demo-ico svg { width: 46px; height: 46px; }
.demo-txt { display: flex; flex-direction: column; justify-content: center; gap: 6px; padding: 0 0 1px 19px; }
.demo-txt p { display: flex; align-items: center; font-size: 13.500px; line-height: 22px; color: #1a9be7; }
.demo-txt p svg { width: 12px; height: 14px; margin-right: 7px; }
.demo-txt p.orange { font-size: 15.500px; color: #f8a82e; }
.demo-txt p.orange svg { width: 14px; height: 16px; }
.corner { position: absolute; top: -1px; right: -1px; width: 42px; height: 42px; border-top-right-radius: 4px; background: #76c4f2; clip-path: polygon(0 0, 100% 0, 100% 100%); }
.corner svg { width: 17px; height: 17px; margin: 4px 0 0 20px; }

.cap { height: 18px; line-height: 18px; margin-top: 73px; font-size: 11.700px; color: #f5ad42; }
.cap.last { margin-top: 75px; }
.tip { position: absolute; line-height: 16px; font-size: 11.700px; color: #f5ad42; }
.pin { position: absolute; width: 7px; height: 30px; border-top: 1px solid #f5a52e; background: linear-gradient(#f5a52e, #f5a52e) center / 1px 100% no-repeat; }
.pin.down { border-top: 0; border-bottom: 1px solid #f5a52e; height: 25px; }
.pin.across { left: 265px; top: 13px; width: 37px; height: 7px; border-top: 0; border-left: 1px solid #f5a52e; background: linear-gradient(#f5a52e, #f5a52e) center / 100% 1px no-repeat; }
.t-set { left: 306px; top: 8px; }
.p-left { left: 35px; top: 62px; }
.t-left { left: -1px; top: 94px; }
.p-mid { left: 165px; top: 62px; }
.t-mid { left: 112px; top: 94px; }
.t-above { left: 112px; top: -32px; }
.p-above { left: 137px; top: -14px; }
.p-pass { left: 137px; top: 61px; }
.t-pass { left: 108px; top: 94px; }

.menu { position: absolute; z-index: 1; width: 111px; list-style: none; background: #fff; border: 1px solid #dde1e6; border-radius: 3px; box-shadow: 0 2px 5px rgba(60, 80, 100, .22); font-size: 13.500px; }
.menu li { height: 36px; line-height: 33px; padding-left: 10px; }
.menu li + li { border-top: 1px solid #e3e5e8; }
.menu::before { content: ""; position: absolute; width: 13px; height: 13px; background: #fff; transform: rotate(45deg); border: 1px solid #dde1e6; }
.menu.beside { left: 276px; top: -1px; height: 111px; }
.menu.beside::before { left: -7px; top: 12px; border-width: 0 0 1px 1px; }
.menu.below { left: 155px; top: 47px; }
.menu.below::before { top: -7px; right: 13px; border-width: 1px 0 0 1px; }

/* ---------- bookmark table ---------- */
.tools { display: flex; justify-content: space-between; align-items: center; }
.count { display: flex; align-items: center; font-size: 17px; }
.count svg { width: 21px; height: 21px; margin-right: 7px; }
.table { margin-top: 28.500px; border-top: 2px solid #55b7ee; }
.tr { height: 48.100px; display: grid; grid-template-columns: 120.500px 153px 268.500px 125px 163px 1fr; border-bottom: 1px solid #dcdcde; border-left: 1px solid #e8e8ea; font-size: 13px; background: #fff; }
.tr > span { display: flex; align-items: center; padding: 0 0 1px 10px; border-right: 1px solid #e8e8ea; }
.tr > span > svg { width: 31px; height: 31px; }
.tr.th { height: 44px; font-size: 15px; border-bottom-color: #e8e8ea; background: transparent; }
.tr.th > span { padding-bottom: 3px; }
.th .caret { margin: 2px 0 0 8px; border-width: 7px 5.500px 0; border-top-color: #999; }
.tr .url { font-size: 14px; letter-spacing: .1px; }
.tr .time { font-size: 13px; letter-spacing: -.35px; }
.btn { width: 68px; height: 27px; display: flex; align-items: center; margin: 2px 9px 0 0; padding-left: 7px; border: 1px solid #1a9be7; border-radius: 3px; color: #1a9be7; font-size: 15px; line-height: 20px; }
.btn svg { width: 16px; height: 16px; margin-right: 6px; }
.btn.del { padding-left: 9px; }
.btn.del svg { width: 14px; margin-right: 5px; }
.pager { width: 174px; height: 34px; display: flex; margin: 27px 0 0 auto; border: 1px solid #e2e4e7; border-radius: 3px; background: #fff; }
.pager span { flex: 1; display: flex; align-items: center; justify-content: center; border-right: 1px solid #e2e4e7; font-size: 14px; }
.pager span:last-child { border-right: 0; }
.pager .on { background: #ebeff4; }
.prev, .next { border: 6px solid transparent; }
.prev { border-right: 10px solid #999; border-left: 0; }
.next { border-left: 10px solid #999; border-right: 0; }

/* ---------- password form ---------- */
.panel.form { padding-top: 37px; }
.field { display: flex; align-items: center; height: 32px; margin-bottom: 19.600px; }
.field label { width: 116px; font-size: 15px; font-weight: 500; line-height: 20px; color: #444; }
.field sup { font-size: 16px; line-height: 0; vertical-align: 2px; color: #e60012; }
.input { width: 575px; height: 32px; line-height: 35px; padding-left: 8px; border: 1px solid #dedede; border-radius: 3px; background: #fff; font-size: 15.500px; }
.submit { width: 103px; height: 34px; line-height: 33px; margin: 29px 0 0 116px; border-radius: 3px; text-align: center; color: #fff; background: #1dbc9c; border-bottom: 1px solid #19a98b; }
```
